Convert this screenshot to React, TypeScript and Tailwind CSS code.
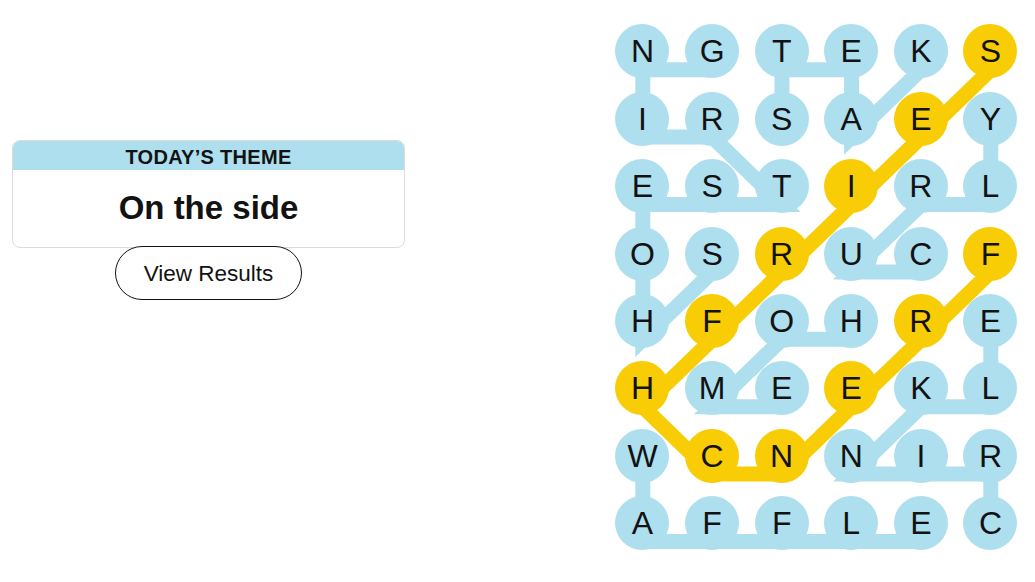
const BLUE = "#aedfee";
const YELLOW = "#f8cd05";

const rows = [
  "NGTEKS",
  "IRSAEY",
  "ESTIRL",
  "OSRUCF",
  "HFOHRE",
  "HMEEKL",
  "WCNNIR",
  "AFFLEC",
];

const CELL_W = 69.6;
const CELL_H = 67.4;
// the connector lines sit a little below the letters in the original
const LINE_DROP = 18;

type Word = { cells: [number, number][]; spangram?: boolean };

const words: Word[] = [
  { cells: [[1, 3], [0, 4], [0, 3], [0, 2], [1, 2], [2, 2], [1, 1], [0, 1], [0, 0], [1, 0]] },
  { cells: [[2, 1], [2, 0], [3, 0], [3, 1], [4, 0]] },
  { cells: [[4, 3], [3, 3], [4, 2], [5, 2], [5, 1]] },
  { cells: [[3, 4], [2, 4], [1, 5], [2, 5]] },
  { cells: [[5, 7], [5, 6], [4, 6], [3, 6], [4, 5], [5, 5], [5, 4]] },
  { cells: [[0, 6], [0, 7], [1, 7], [2, 7], [3, 7], [4, 7]] },
  {
    cells: [[5, 3], [4, 4], [3, 5], [2, 6], [1, 6], [0, 5], [1, 4], [2, 3], [3, 2], [4, 1], [5, 0]],
    spangram: true,
  },
];

const spangramCells = new Set(
  words.filter((w) => w.spangram).flatMap((w) => w.cells.map(([c, r]) => `${c},${r}`))
);

function Connectors() {
  return (
    <svg
      className="absolute inset-0 pointer-events-none"
      width={CELL_W * 6}
      height={CELL_H * 8}
      viewBox={`0 0 ${CELL_W * 6} ${CELL_H * 8}`}
    >
      {words.map((w, i) => (
        <polyline
          key={i}
          points={w.cells
            .map(([c, r]) => `${(c + 0.5) * CELL_W},${(r + 0.5) * CELL_H + LINE_DROP}`)
            .join(" ")}
          fill="none"
          stroke={w.spangram ? YELLOW : BLUE}
          strokeWidth={15}
          strokeLinejoin="miter"
          strokeLinecap="butt"
        />
      ))}
    </svg>
  );
}

function LetterGrid() {
  return (
    <div className="relative ml-[202.7px] mt-[17.8px] shrink-0">
      <Connectors />
      <div className="relative grid grid-cols-[repeat(6,69.6px)] grid-rows-[repeat(8,67.4px)]">
        {rows.flatMap((row, r) =>
          row.split("").map((letter, c) => {
            const gold = spangramCells.has(`${c},${r}`);
            return (
              <div key={`${c}-${r}`} className="flex items-center justify-center">
                <div
                  className={`flex items-center justify-center size-[54px] rounded-full font-['Liberation_Sans',Arial,sans-serif] text-[32px] leading-none text-[#121212] ${
                    gold ? "bg-[#f8cd05]" : "bg-[#aedfee]"
                  }`}
                >
                  {letter}
                </div>
              </div>
            );
          })
        )}
      </div>
    </div>
  );
}

function ThemePanel() {
  return (
    <div className="flex flex-col items-center w-[393px] ml-[12px] mt-[140px] shrink-0">
      <div className="w-full rounded-[8px] border border-[#dcdcdc] overflow-hidden bg-white">
        <div className="flex items-center justify-center h-[30px] bg-[#aedfee] -mx-px -mt-px pt-[3px]">
          <p className="font-['Liberation_Sans',Arial,sans-serif] font-bold text-[20px] tracking-[0.3px] text-[#121212] leading-none">
            TODAY’S THEME
          </p>
        </div>
        <div className="flex items-center justify-center h-[77px] pb-[3px]">
          <p className="font-['Liberation_Sans',Arial,sans-serif] font-bold text-[33px] text-[#121212] leading-none">
            On the side
          </p>
        </div>
      </div>
      <button className="-mt-[2px] flex items-center justify-center w-[187px] h-[54px] rounded-full border border-[#121212] bg-white font-['Liberation_Sans',Arial,sans-serif] text-[22.5px] text-[#121212] pt-[1px]">
        View Results
      </button>
    </div>
  );
}

export default function App() {
  return (
    <div className="flex items-start w-[1035px] h-[582px] bg-white overflow-hidden">
      <ThemePanel />
      <LetterGrid />
    </div>
  );
}
